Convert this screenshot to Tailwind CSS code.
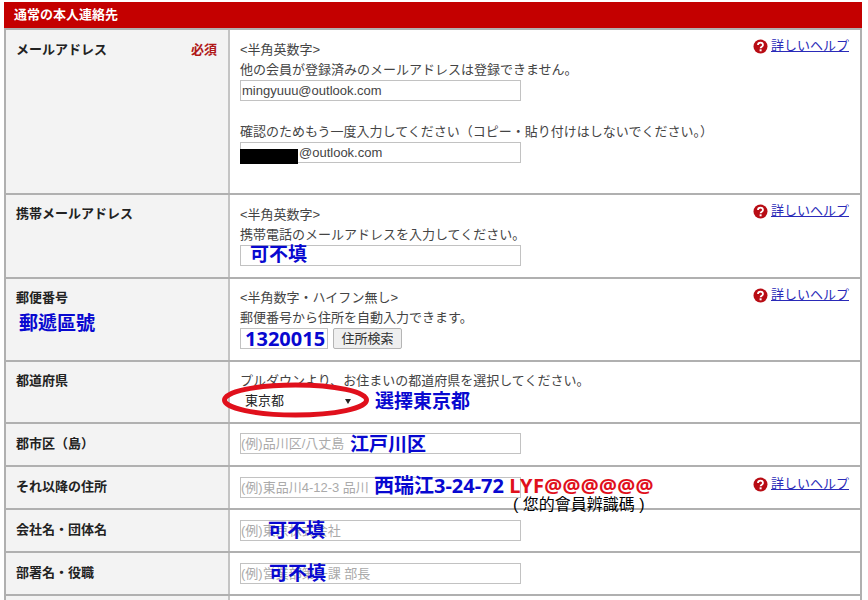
<!DOCTYPE html>
<html lang="ja">
<head>
  <meta charset="UTF-8" />
  <title>通常の本人連絡先</title>
  <script src="https://cdn.jsdelivr.net/npm/@tailwindcss/browser@4"></script>
</head>
<body class="bg-white">
  <div class="relative w-[868px] h-[600px] overflow-hidden pt-[2px] pl-[4px] font-['Liberation_Sans','Noto_Sans_CJK_JP',sans-serif] text-[13px] leading-[20px] text-[#444]">
    <div class="w-[858px] h-[26px] bg-[#c40000] pl-[10px] text-[13px] font-bold leading-[25px] text-white">通常の本人連絡先</div>

    <div class="w-[858px] border-x-2 border-[#b0b0b0]">
      <!-- メールアドレス -->
      <div class="flex h-[165px] border-t-2 border-[#b0b0b0]">
        <div class="flex w-[222px] shrink-0 justify-between bg-[#f3f3f3] pl-[10px] pr-[11px] pt-[10px]">
          <span class="font-bold text-[#222]">メールアドレス</span>
          <span class="font-bold text-[#b01818]">必須</span>
        </div>
        <div class="relative flex-1 border-l-2 border-[#c4c4c4] pl-[10px] pt-[10px]">
          <a class="absolute right-[11px] top-[6px] flex items-center gap-[3px] text-[#2a2ab8] underline">
            <svg class="h-[15px] w-[15px]" viewBox="0 0 15 15"><circle cx="7.5" cy="7.5" r="7" fill="#b80c14"/><path d="M5 6c0-3.2 5-3.2 5 0 0 1.7-2.4 1.6-2.4 3.2" fill="none" stroke="#fff" stroke-width="1.8"/><rect x="6.6" y="10.3" width="2" height="2" fill="#fff"/></svg>
            詳しいヘルプ
          </a>
          <p>&lt;半角英数字&gt;</p>
          <p>他の会員が登録済みのメールアドレスは登録できません。</p>
          <div class="h-[21px] w-[281px] border border-[#c2c2c2] pl-[1px] leading-[19px]">mingyuuu@outlook.com</div>
          <p class="mt-[21px]">確認のためもう一度入力してください（コピー・貼り付けはしないでください。）</p>
          <div class="relative h-[21px] w-[281px] border border-[#c2c2c2] pl-[58px] leading-[19px]">@outlook.com
            <span class="absolute left-[-1px] top-[6px] h-[15px] w-[58px] bg-black"></span>
          </div>
        </div>
      </div>

      <!-- 携帯メールアドレス -->
      <div class="flex h-[84px] border-t-2 border-[#b0b0b0]">
        <div class="w-[222px] shrink-0 bg-[#f3f3f3] pl-[10px] pt-[9px] font-bold text-[#222]">携帯メールアドレス</div>
        <div class="relative flex-1 border-l-2 border-[#c4c4c4] pl-[10px] pt-[10px]">
          <a class="absolute right-[11px] top-[6px] flex items-center gap-[3px] text-[#2a2ab8] underline">
            <svg class="h-[15px] w-[15px]" viewBox="0 0 15 15"><circle cx="7.5" cy="7.5" r="7" fill="#b80c14"/><path d="M5 6c0-3.2 5-3.2 5 0 0 1.7-2.4 1.6-2.4 3.2" fill="none" stroke="#fff" stroke-width="1.8"/><rect x="6.6" y="10.3" width="2" height="2" fill="#fff"/></svg>
            詳しいヘルプ
          </a>
          <p>&lt;半角英数字&gt;</p>
          <p>携帯電話のメールアドレスを入力してください。</p>
          <div class="h-[21px] w-[281px] border border-[#c2c2c2] pl-[9px] text-[19px] font-bold leading-[18px] text-[#0808d0]">可不填</div>
        </div>
      </div>

      <!-- 郵便番号 -->
      <div class="flex h-[83px] border-t-2 border-[#b0b0b0]">
        <div class="w-[222px] shrink-0 bg-[#f3f3f3] pl-[10px] pt-[9px] font-bold text-[#222]">
          <p>郵便番号</p>
          <p class="pl-[3px] pt-[4px] text-[19px] font-bold leading-[24px] text-[#0808d0]">郵遞區號</p>
        </div>
        <div class="relative flex-1 border-l-2 border-[#c4c4c4] pl-[10px] pt-[9px]">
          <a class="absolute right-[11px] top-[6px] flex items-center gap-[3px] text-[#2a2ab8] underline">
            <svg class="h-[15px] w-[15px]" viewBox="0 0 15 15"><circle cx="7.5" cy="7.5" r="7" fill="#b80c14"/><path d="M5 6c0-3.2 5-3.2 5 0 0 1.7-2.4 1.6-2.4 3.2" fill="none" stroke="#fff" stroke-width="1.8"/><rect x="6.6" y="10.3" width="2" height="2" fill="#fff"/></svg>
            詳しいヘルプ
          </a>
          <p>&lt;半角数字・ハイフン無し&gt;</p>
          <p>郵便番号から住所を自動入力できます。</p>
          <div class="flex items-center gap-[5px]">
            <div class="h-[21px] w-[88px] border border-[#c2c2c2] pl-[4px] font-['Noto_Sans',sans-serif] text-[20px] font-bold leading-[19px] text-[#0808d0]">1320015</div>
            <button class="h-[21px] w-[69px] rounded-[2px] border border-[#b5b5b5] bg-[#efefef] text-[13px] leading-[19px] text-[#333]">住所検索</button>
          </div>
        </div>
      </div>

      <!-- 都道府県 -->
      <div class="flex h-[62px] border-t-2 border-[#b0b0b0]">
        <div class="w-[222px] shrink-0 bg-[#f3f3f3] pl-[10px] pt-[9px] font-bold text-[#222]">都道府県</div>
        <div class="relative flex-1 border-l-2 border-[#c4c4c4] pl-[10px] pt-[9px]">
          <p>プルダウンより、お住まいの都道府県を選択してください。</p>
          <div class="ml-[3px] flex h-[20px] w-[116px] items-center justify-between pl-[2px] pr-[8px] leading-[20px] text-[#222]">
            <span>東京都</span>
            <span class="h-0 w-0 border-x-[3px] border-t-[5px] border-x-transparent border-t-[#222]"></span>
          </div>
        </div>
      </div>

      <!-- 郡市区（島） -->
      <div class="flex h-[43px] border-t-2 border-[#b0b0b0]">
        <div class="w-[222px] shrink-0 bg-[#f3f3f3] pl-[10px] pt-[10px] font-bold text-[#222]">郡市区（島）</div>
        <div class="flex-1 border-l-2 border-[#c4c4c4] pl-[10px] pt-[9px]">
          <div class="h-[21px] w-[281px] border border-[#c2c2c2] leading-[19px] text-[#aaa]">(例)品川区/八丈島</div>
        </div>
      </div>

      <!-- それ以降の住所 -->
      <div class="flex h-[43px] border-t-2 border-[#b0b0b0]">
        <div class="w-[222px] shrink-0 bg-[#f3f3f3] pl-[10px] pt-[10px] font-bold text-[#222]">それ以降の住所</div>
        <div class="relative flex-1 border-l-2 border-[#c4c4c4] pl-[10px] pt-[10px]">
          <a class="absolute right-[11px] top-[7px] flex items-center gap-[3px] text-[#2a2ab8] underline">
            <svg class="h-[15px] w-[15px]" viewBox="0 0 15 15"><circle cx="7.5" cy="7.5" r="7" fill="#b80c14"/><path d="M5 6c0-3.2 5-3.2 5 0 0 1.7-2.4 1.6-2.4 3.2" fill="none" stroke="#fff" stroke-width="1.8"/><rect x="6.6" y="10.3" width="2" height="2" fill="#fff"/></svg>
            詳しいヘルプ
          </a>
          <div class="h-[21px] w-[281px] border border-[#c2c2c2] leading-[19px] text-[#aaa]">(例)東品川4-12-3 品川</div>
        </div>
      </div>

      <!-- 会社名・団体名 -->
      <div class="flex h-[43px] border-t-2 border-[#b0b0b0]">
        <div class="w-[222px] shrink-0 bg-[#f3f3f3] pl-[10px] pt-[10px] font-bold text-[#222]">会社名・団体名</div>
        <div class="flex-1 border-l-2 border-[#c4c4c4] pl-[10px] pt-[10px]">
          <div class="h-[21px] w-[281px] border border-[#c2c2c2] leading-[19px] text-[#aaa]">(例)東京株式会社</div>
        </div>
      </div>

      <!-- 部署名・役職 -->
      <div class="flex h-[43px] border-t-2 border-[#b0b0b0]">
        <div class="w-[222px] shrink-0 bg-[#f3f3f3] pl-[10px] pt-[10px] font-bold text-[#222]">部署名・役職</div>
        <div class="flex-1 border-l-2 border-[#c4c4c4] pl-[10px] pt-[10px]">
          <div class="h-[21px] w-[281px] border border-[#c2c2c2] leading-[19px] text-[#aaa]">(例)営業部第一課 部長</div>
        </div>
      </div>

      <div class="flex h-[10px] border-t-2 border-[#b0b0b0]">
        <div class="w-[222px] shrink-0 bg-[#f3f3f3]"></div>
        <div class="flex-1 border-l-2 border-[#c4c4c4]"></div>
      </div>
    </div>

    <!-- hand-drawn annotations over the form -->
    <svg class="absolute left-[220px] top-[382px]" width="152" height="36" viewBox="0 0 152 36"><ellipse cx="75.5" cy="18" rx="71" ry="15" fill="none" stroke="#e0101c" stroke-width="5"/></svg>
    <span class="absolute left-[375px] top-[390px] text-[19px] font-bold leading-[24px] text-[#0808d0]">選擇東京都</span>
    <span class="absolute left-[350px] top-[433px] text-[19px] font-bold leading-[24px] text-[#0808d0]">江戸川区</span>
    <span class="absolute left-[374px] top-[474px] whitespace-nowrap font-['Noto_Sans','Noto_Sans_CJK_JP',sans-serif] text-[20px] font-bold leading-[24px] text-[#0808d0]">西瑞江3-24-72 <span class="tracking-[0.3px] text-[#e0101c]">LYF@@@@@@</span></span>
    <span class="absolute left-[513px] top-[495px] whitespace-nowrap text-[16px] leading-[20px] text-black">( 您的會員辨識碼 )</span>
    <span class="absolute left-[268px] top-[519px] text-[19px] font-bold leading-[24px] text-[#0808d0]">可不填</span>
    <span class="absolute left-[269px] top-[562px] text-[19px] font-bold leading-[24px] text-[#0808d0]">可不填</span>
  </div>
</body>
</html>
